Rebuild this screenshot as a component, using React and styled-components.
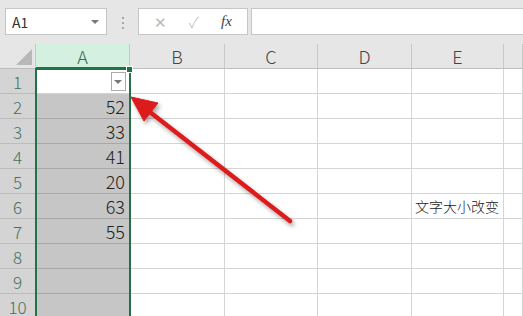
import React from "react";
import styled, { createGlobalStyle } from "styled-components";

const GlobalStyle = createGlobalStyle`
  body {
    margin: 0;
    background: #ffffff;
    overflow: hidden;
  }
`;

const Page = styled.div`
  position: relative;
  width: 523px;
  height: 316px;
  overflow: hidden;
  font-family: "Noto Sans CJK SC", "Noto Sans", sans-serif;
`;

const Toolbar = styled.div`
  display: flex;
  align-items: flex-start;
  height: 44px;
  box-sizing: border-box;
  padding: 8px 0 0 5px;
  background: #e6e6e6;
`;

const Box = styled.div`
  display: flex;
  align-items: center;
  height: 27px;
  box-sizing: border-box;
  background: #ffffff;
  border: 1px solid #c6c6c6;
`;

const NameBox = styled(Box)`
  width: 102px;
  padding: 0 6px;
  justify-content: space-between;
  font-size: 14px;
  color: #333;
`;

const SmallCaret = styled.span`
  width: 0;
  height: 0;
  border-left: 4px solid transparent;
  border-right: 4px solid transparent;
  border-top: 4px solid #777;
  margin-right: 1px;
`;

const Dots = styled.div`
  display: flex;
  flex-direction: column;
  gap: 3px;
  width: 31px;
  align-items: center;
  padding-top: 9px;

  span {
    width: 2px;
    height: 2px;
    background: #a8a8a8;
  }
`;

const FormulaButtons = styled(Box)`
  width: 110px;
  justify-content: space-around;
  padding: 0 4px;
  color: #b8b8b8;
`;

const Glyph = styled.span`
  font-size: 15px;
  font-weight: 300;
`;

const Fx = styled.span`
  font-family: "Liberation Serif", serif;
  font-style: italic;
  font-size: 15px;
  color: #444;
`;

const FormulaInput = styled(Box)`
  flex: 1;
  margin-left: 3px;
  border-right: none;
`;

const Grid = styled.div`
  display: grid;
  grid-template-columns: 36px 94px 95px 93px 94px 92px 1fr;
  grid-auto-rows: 25px;
`;

const Corner = styled.div`
  position: relative;
  background: #e6e6e6;
  border-right: 1px solid #c8c8c8;
  border-bottom: 1px solid #bdbdbd;
  box-sizing: border-box;

  &::after {
    content: "";
    position: absolute;
    right: 3px;
    bottom: 3px;
    width: 0;
    height: 0;
    border-left: 16px solid transparent;
    border-bottom: 16px solid #b8b8b8;
  }
`;

const ColHeader = styled.div`
  display: flex;
  align-items: center;
  justify-content: center;
  box-sizing: border-box;
  font-size: 18px;
  font-weight: 300;
  background: ${(p) => (p.$active ? "#d3f0e0" : "#e6e6e6")};
  color: ${(p) => (p.$active ? "#3d6b55" : "#444")};
  border-right: 1px solid #c8c8c8;
  border-bottom: ${(p) => (p.$active ? "2px solid #217346" : "1px solid #bdbdbd")};
`;

const RowHeader = styled.div`
  display: flex;
  align-items: center;
  justify-content: center;
  box-sizing: border-box;
  font-size: 17px;
  font-weight: 300;
  background: #d4d4d4;
  color: #46705c;
  border-right: 1px solid #9b9b9b;
  border-bottom: 1px solid #bcbcbc;
`;

const Cell = styled.div`
  position: relative;
  display: flex;
  align-items: center;
  justify-content: ${(p) => (p.$text ? "flex-start" : "flex-end")};
  box-sizing: border-box;
  padding: ${(p) => (p.$text ? "0 0 0 3px" : "0 4px 0 0")};
  font-size: ${(p) => (p.$text ? "14px" : "18px")};
  font-weight: 300;
  white-space: nowrap;
  color: #222;
  background: ${(p) => (p.$sel ? "#c6c6c6" : "#ffffff")};
  border-right: 1px solid #d4d4d4;
  border-bottom: 1px solid ${(p) => (p.$sel ? "#a8a8a8" : "#d4d4d4")};
`;

const FilterButton = styled.div`
  position: absolute;
  right: 3px;
  top: 3px;
  width: 15px;
  height: 19px;
  box-sizing: border-box;
  border: 1px solid #ababab;
  background: #ffffff;
  display: flex;
  align-items: center;
  justify-content: center;
`;

const Selection = styled.div`
  position: absolute;
  left: 35px;
  top: 68px;
  width: 96px;
  height: 260px;
  box-sizing: border-box;
  border: 2px solid #217346;
  pointer-events: none;

  &::after {
    content: "";
    position: absolute;
    right: -4px;
    top: -4px;
    width: 5px;
    height: 5px;
    background: #217346;
    border: 1px solid #fff;
  }
`;

const ArrowLayer = styled.svg`
  position: absolute;
  left: 0;
  top: 0;
  pointer-events: none;
`;

const values = ["", "52", "33", "41", "20", "63", "55", "", "", ""];
const columns = ["A", "B", "C", "D", "E", ""];

export default function App() {
  return (
    <Page>
      <GlobalStyle />
      <Toolbar>
        <NameBox>
          <span>A1</span>
          <SmallCaret />
        </NameBox>
        <Dots>
          <span />
          <span />
          <span />
        </Dots>
        <FormulaButtons>
          <Glyph>✕</Glyph>
          <Glyph>✓</Glyph>
          <Fx>fx</Fx>
        </FormulaButtons>
        <FormulaInput />
      </Toolbar>
      <Grid>
        <Corner />
        {columns.map((c, i) => (
          <ColHeader key={i} $active={c === "A"}>
            {c}
          </ColHeader>
        ))}
        {values.map((v, r) => (
          <React.Fragment key={r}>
            <RowHeader>{r + 1}</RowHeader>
            <Cell $sel={r > 0}>
              {v}
              {r === 0 && (
                <FilterButton>
                  <SmallCaret />
                </FilterButton>
              )}
            </Cell>
            <Cell />
            <Cell />
            <Cell />
            <Cell $text>{r === 5 ? "文字大小改变" : ""}</Cell>
            <Cell />
          </React.Fragment>
        ))}
      </Grid>
      <Selection />
      <ArrowLayer width="523" height="316">
        <defs>
          <filter id="shadow" x="-20%" y="-20%" width="140%" height="140%">
            <feDropShadow dx="2" dy="3" stdDeviation="2" floodColor="#000" floodOpacity="0.35" />
          </filter>
        </defs>
        <g filter="url(#shadow)" fill="#dc1c1c" stroke="#dc1c1c">
          <line x1="290" y1="221" x2="146" y2="109" strokeWidth="4.5" strokeLinecap="round" />
          <polygon points="131,97 158,103 144,121" strokeWidth="1" strokeLinejoin="round" />
        </g>
      </ArrowLayer>
    </Page>
  );
}
